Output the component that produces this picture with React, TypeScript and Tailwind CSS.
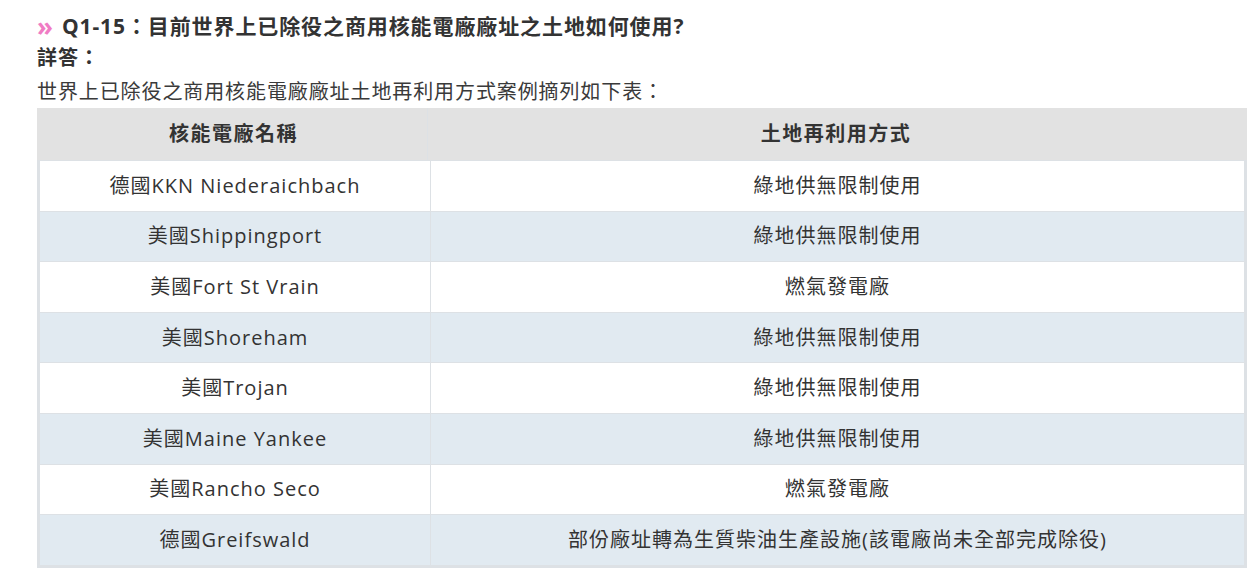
import React from "react";

const rows = [
  { name: "德國KKN Niederaichbach", use: "綠地供無限制使用" },
  { name: "美國Shippingport", use: "綠地供無限制使用" },
  { name: "美國Fort St Vrain", use: "燃氣發電廠" },
  { name: "美國Shoreham", use: "綠地供無限制使用" },
  { name: "美國Trojan", use: "綠地供無限制使用" },
  { name: "美國Maine Yankee", use: "綠地供無限制使用" },
  { name: "美國Rancho Seco", use: "燃氣發電廠" },
  { name: "德國Greifswald", use: "部份廠址轉為生質柴油生產設施(該電廠尚未全部完成除役)" },
];

export default function App() {
  return (
    <div
      className="bg-white min-h-[583px] pl-[37px] pr-[12px] text-[#333] text-[20px]"
      style={{ fontFamily: '"Open Sans", "Noto Sans CJK TC", sans-serif' }}
    >
      {/* Question title */}
      <div className="flex items-center h-[44px] pt-[10px] font-bold text-[21px] tracking-[0.9px]">
        <span className="text-[#f07cc4] text-[26px] leading-none mr-[8px] -mt-[3px]">»</span>
        <span>Q1-15：目前世界上已除役之商用核能電廠廠址之土地如何使用?</span>
      </div>
      <div className="h-[28px] leading-[28px] font-bold tracking-[1px]">詳答：</div>
      <div className="h-[36px] pt-[4px] leading-[32px] tracking-[0.9px] text-[#3a3a3a]">
        世界上已除役之商用核能電廠廠址土地再利用方式案例摘列如下表：
      </div>

      {/* Table */}
      <div className="bg-[#dde1e5] px-[3px] pb-[3px] flex flex-col gap-px">
        <div className="grid grid-cols-[390px_1fr] gap-px h-[52px] -mx-[3px]">
          <div className="bg-[#e2e2e2] flex items-center justify-center font-bold tracking-[1.5px] pl-[3px]">
            核能電廠名稱
          </div>
          <div className="bg-[#e2e2e2] flex items-center justify-center font-bold tracking-[1.5px] pr-[3px]">
            土地再利用方式
          </div>
        </div>
        {rows.map((r, i) => (
          <div key={i} className="grid grid-cols-[390px_1fr] gap-px h-[49.6px]">
            <div
              className={`flex items-center justify-center tracking-[1px] ${
                i % 2 === 1 ? "bg-[#e1eaf1]" : "bg-white"
              }`}
            >
              {r.name}
            </div>
            <div
              className={`flex items-center justify-center tracking-[1px] ${
                i % 2 === 1 ? "bg-[#e1eaf1]" : "bg-white"
              }`}
            >
              {r.use}
            </div>
          </div>
        ))}
      </div>
    </div>
  );
}
